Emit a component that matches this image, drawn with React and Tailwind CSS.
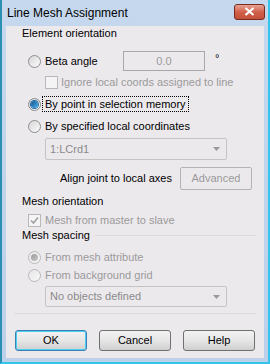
import React from "react";

const font = { fontFamily: '"Liberation Sans", Arial, sans-serif' };

function Radio({ checked, disabled }) {
  return (
    <div
      className={`relative w-[13px] h-[13px] rounded-full border flex items-center justify-center shrink-0 ${
        disabled ? "border-[#b8b8b8] bg-gradient-to-br from-[#e6e6e6] to-[#f8f8f8]" : "border-[#8d8d8d] bg-gradient-to-br from-[#d6d6d6] to-[#fbfbfb]"
      }`}
    >
      {checked && (
        <div
          className={`w-[7px] h-[7px] rounded-full ${
            disabled
              ? "bg-gradient-to-br from-[#9a9a9a] to-[#c8c8c8]"
              : "bg-gradient-to-br from-[#0f4f8a] to-[#4fb6ee] shadow-[0_0_0_1px_#1d6aa8]"
          }`}
        />
      )}
    </div>
  );
}

function Check({ checked }) {
  return (
    <div className="w-[13px] h-[13px] border border-[#b8b8b8] bg-[#f4f4f4] flex items-center justify-center shrink-0">
      {checked && (
        <svg width="9" height="9" viewBox="0 0 9 9">
          <path d="M1 4.5 L3.5 7 L8 1.5" stroke="#a0a0a0" strokeWidth="1.6" fill="none" />
        </svg>
      )}
    </div>
  );
}

function Combo({ text }) {
  return (
    <div className="ml-[39px] w-[182px] h-full border border-[#c4c4c4] rounded-[2px] flex items-center pl-[4px] pr-[6px] text-[#8a8a8a]">
      <span className="flex-1">{text}</span>
      <svg width="7" height="4" viewBox="0 0 7 4">
        <path d="M0 0 L7 0 L3.5 4 Z" fill="#9a9a9a" />
      </svg>
    </div>
  );
}

function Btn({ children, focused }) {
  return (
    <div
      className={`w-[72px] h-[21px] rounded-[3px] border flex items-center justify-center text-black bg-gradient-to-b from-[#f2f2f2] via-[#e6e6e6] to-[#cfcfcf] ${
        focused ? "border-[#3c7fb1] shadow-[inset_0_0_0_1px_#4ad0f5]" : "border-[#707070]"
      }`}
    >
      {children}
    </div>
  );
}

export default function App() {
  return (
    <div
      className="w-[270px] h-[364px] bg-gradient-to-b from-[#c5d8ee] to-[#bcd0ea] border-l-2 border-l-[#2a8fb0] border-r-2 border-r-[#36c4ea] border-b-2 border-b-[#36c4ea] flex flex-col text-[11px]"
      style={font}
    >
      <div className="h-[26px] flex items-center pl-[5px] pr-[3px] shrink-0">
        <span className="flex-1 text-[12px] text-black">Line Mesh Assignment</span>
        <div className="w-[31px] h-[16px] rounded-[3px] border border-[#7a2a1e] bg-gradient-to-b from-[#e8a394] via-[#d0604a] to-[#c34f3a] flex items-center justify-center mb-[3px]">
          <svg width="11" height="9" viewBox="0 0 11 9">
            <path d="M1.5 1 L9.5 8 M9.5 1 L1.5 8" stroke="white" strokeWidth="2.2" />
          </svg>
        </div>
      </div>
      <div className="flex-1 mx-[4px] mb-[4px] bg-[#ece9ed] flex flex-col relative text-black">
        <div className="h-[14px] flex items-center pl-[16px]">Element orientation</div>
        <div className="mt-[11px] h-[20px] flex items-center pl-[22px]">
          <Radio />
          <span className="ml-[4px] w-[78px]">Beta angle</span>
          <div className="w-[82px] h-[20px] border border-[#a8a8a8] flex items-center justify-center text-[#9a9a9a]">0.0</div>
          <span className="ml-[10px] -mt-[6px]">°</span>
        </div>
        <div className="mt-[4px] h-[14px] flex items-center pl-[39px]">
          <Check />
          <span className="ml-[3px] text-[#9a9a9a]">Ignore local coords assigned to line</span>
        </div>
        <div className="mt-[7px] h-[16px] flex items-center pl-[22px]">
          <Radio checked />
          <span className="ml-[1px] px-[2px] border border-dotted border-black leading-[14px]">By point in selection memory</span>
        </div>
        <div className="mt-[6px] h-[16px] flex items-center pl-[22px]">
          <Radio />
          <span className="ml-[4px]">By specified local coordinates</span>
        </div>
        <div className="mt-[4px] h-[22px] flex">
          <Combo text="1:LCrd1" />
        </div>
        <div className="mt-[7px] h-[23px] flex items-center pl-[54px]">
          <span className="w-[120px]">Align joint to local axes</span>
          <div className="w-[72px] h-[23px] border border-[#b4b4b4] rounded-[2px] flex items-center justify-center text-[#9a9a9a]">Advanced</div>
        </div>
        <div className="mt-[4px] h-[14px] flex items-center pl-[16px]">Mesh orientation</div>
        <div className="mt-[5px] h-[14px] flex items-center pl-[22px]">
          <Check checked />
          <span className="ml-[4px] text-[#9a9a9a]">Mesh from master to slave</span>
        </div>
        <div className="mt-[1px] h-[14px] flex items-center pl-[16px]">
          <span>Mesh spacing</span>
          <div className="flex-1 ml-[4px] mr-[8px] h-px bg-[#dedade]" />
        </div>
        <div className="mt-[8px] h-[14px] flex items-center pl-[22px]">
          <Radio checked disabled />
          <span className="ml-[4px] text-[#9a9a9a]">From mesh attribute</span>
        </div>
        <div className="mt-[4px] h-[14px] flex items-center pl-[22px]">
          <Radio disabled />
          <span className="ml-[4px] text-[#9a9a9a]">From background grid</span>
        </div>
        <div className="mt-[4px] h-[21px] flex">
          <Combo text="No objects defined" />
        </div>
        <div className="mt-[6px] mx-[8px] h-px bg-[#dedade]" />
        <div className="mt-[16px] h-[21px] flex items-center pl-[9px] gap-[12px]">
          <Btn focused>OK</Btn>
          <Btn>Cancel</Btn>
          <Btn>Help</Btn>
        </div>
      </div>
    </div>
  );
}
